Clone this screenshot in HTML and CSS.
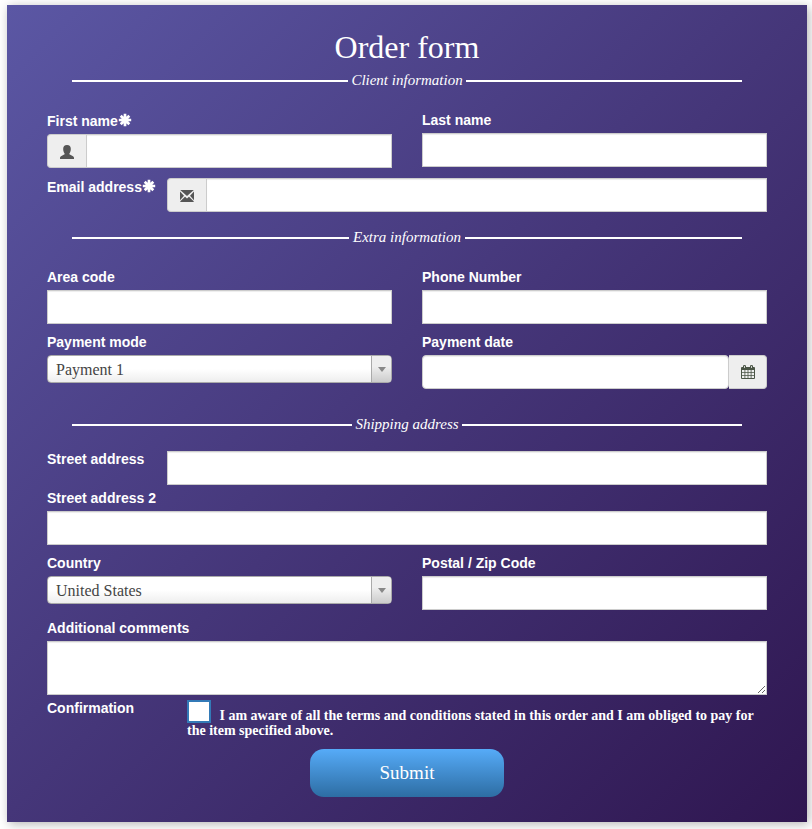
FILE: index.html
```html
<!DOCTYPE html>
<html lang="en">
<head>
<meta charset="utf-8">
<title>Order form</title>
<link rel="stylesheet" href="styles.css">
</head>
<body>
<svg class="defs" aria-hidden="true">
  <symbol id="asterisk" viewBox="0 0 14 14"><path d="M7 .8v12.400M.8 7h12.400M2.700 2.700l8.600 8.600M11.300 2.700l-8.600 8.600" stroke="currentColor" stroke-width="2.700"/></symbol>
  <symbol id="user" viewBox="0 0 14 14"><path fill="currentColor" d="M7 0C9.600 0 10.800 1.500 10.800 3.800C10.800 5.800 10.400 7.200 9.400 8.400V9.300L13 11.200C13.700 11.600 14 12 14 12.700V14H0V12.700C0 12 .3 11.600 1 11.200L4.600 9.300V8.400C3.600 7.200 3.200 5.800 3.200 3.800C3.200 1.500 4.400 0 7 0Z"/></symbol>
  <symbol id="mail" viewBox="0 0 14 12"><path fill="currentColor" d="M.2 0H13.800L7 6.100ZM0 1.400L4 5.700L0 10.200ZM14 1.400V10.200L10 5.700ZM5 6.700L7 8.500L9 6.700L13.700 11.200V12H.3V11.200Z"/></symbol>
  <symbol id="calendar" viewBox="0 0 14 14"><path fill="currentColor" fill-rule="evenodd" d="M1 2H2V1Q2 0 3.500 0T5 1V2H9V1Q9 0 10.500 0T12 1V2H13Q14 2 14 3V13Q14 14 13 14H1Q0 14 0 13V3Q0 2 1 2ZM1 5V7H3.500V5ZM4.300 5V7H6.600V5ZM7.400 5V7H9.700V5ZM10.500 5V7H13V5ZM1 7.800V10H3.500V7.800ZM4.300 7.800V10H6.600V7.800ZM7.400 7.800V10H9.700V7.800ZM10.500 7.800V10H13V7.800ZM1 10.800V13H3.500V10.800ZM4.300 10.800V13H6.600V10.800ZM7.400 10.800V13H9.700V10.800ZM10.500 10.800V13H13V10.800ZM3.100 1V3H3.900V1ZM10.100 1V3H10.900V1Z"/></symbol>
</svg>
<form class="order">
  <h1>Order form</h1>
  <div class="legend"><span>Client information</span></div>
  <div class="row names">
    <div class="field required"><label>First name<svg class="star"><use href="#asterisk"/></svg></label>
      <div class="group"><span class="addon"><svg class="icon"><use href="#user"/></svg></span><input type="text"></div></div>
    <div class="field"><label>Last name</label><input type="text"></div>
  </div>
  <div class="inline email"><label>Email address<svg class="star"><use href="#asterisk"/></svg></label>
    <div class="group"><span class="addon"><svg class="icon mail"><use href="#mail"/></svg></span><input type="text"></div></div>

  <div class="legend extra"><span>Extra information</span></div>
  <div class="row phone">
    <div class="field"><label>Area code</label><input type="text"></div>
    <div class="field"><label>Phone Number</label><input type="text"></div>
  </div>
  <div class="row">
    <div class="field"><label>Payment mode</label><div class="select"><span>Payment 1</span><b></b></div></div>
    <div class="field"><label>Payment date</label>
      <div class="group date"><input type="text"><span class="addon"><svg class="icon cal"><use href="#calendar"/></svg></span></div></div>
  </div>

  <div class="legend shipping"><span>Shipping address</span></div>
  <div class="inline street"><label>Street address</label><input type="text"></div>
  <div class="field street2"><label>Street address 2</label><input type="text"></div>
  <div class="row">
    <div class="field"><label>Country</label><div class="select"><span>United States</span><b></b></div></div>
    <div class="field"><label>Postal / Zip Code</label><input type="text"></div>
  </div>
  <div class="field comments"><label>Additional comments</label><textarea></textarea></div>
  <div class="confirm"><label>Confirmation</label>
    <p><span class="box"></span>I am aware of all the terms and conditions stated in this order and I am obliged to pay for the item specified above.</p></div>
  <button type="button">Submit</button>
</form>
</body>
</html>
```
FILE: styles.css
```css
* { box-sizing: border-box; }
body { margin: 0; padding: 5px 5px 7px 7px; background: #fff; overflow: hidden; font-family: "Liberation Serif", serif; color: #fff; }
.defs { display: none; }
.order { width: 800px; height: 817px; padding: 22px 40px 0; background: linear-gradient(135deg, #5b57a4 0%, #453679 50%, #2f1650 100%); box-shadow: 2px 2px 10px rgba(0, 0, 0, .3); display: flex; flex-direction: column; }
h1 { margin: 0; height: 40px; line-height: 40px; font-size: 32px; font-weight: 400; text-align: center; }
.legend { display: flex; align-items: center; gap: 3.5px; margin: 4px 25px 0; height: 18px; font-size: 15px; line-height: 18px; font-style: italic; }
.legend::before, .legend::after { content: ""; flex: 1; height: 2px; margin-top: 2px; background: #fff; }
.legend.extra { margin-top: 16px; gap: 4px; }
.legend.shipping { margin-top: 26px; }
.row { display: grid; grid-template-columns: 1fr 1fr; column-gap: 30px; margin-top: 8px; }
.names { margin-top: 21px; }
.phone { margin-top: 21px; }
label { display: block; height: 23px; font: bold 14px/20px "Liberation Sans", sans-serif; }
.required label { height: 24px; padding-top: 1px; }
.star { width: 14px; height: 14px; vertical-align: -1px; }
input, textarea { display: block; width: 100%; height: 34px; border: 1px solid #ccc; border-radius: 0; padding: 6px 12px; background: #fff; box-shadow: inset 0 1px 1px rgba(0, 0, 0, .075); outline: 0; }
.group { display: flex; height: 34px; }
.group input { flex: 1; min-width: 0; }
.addon { flex: none; width: 39px; display: flex; align-items: center; justify-content: center; background: #eee; border: 1px solid #ccc; border-right: 0; border-radius: 4px 0 0 4px; color: #555; }
.addon + input { width: auto; }
.icon { width: 14px; height: 14px; margin: 2px 1px 0 0; }
.icon.mail { height: 12px; margin: 2px 1px 0 0; }
.icon.cal { margin: 0; }
.date input { border-radius: 4px; }
.date .addon { border: 1px solid #ccc; border-left: 0; border-radius: 0 4px 4px 0; width: 38px; }
.date .cal { color: #4a5545; }
.inline { display: grid; grid-template-columns: 120px 1fr; }
.email { margin-top: 10px; height: 34px; }
.email label { margin-top: -1px; }
.select { display: flex; height: 28px; border: 1px solid #aaa; border-radius: 4px; overflow: hidden; background: linear-gradient(#fff 0%, #fff 50%, #eee 100%); color: #444; font-size: 16px; line-height: 28px; }
.select span { flex: 1; padding-left: 8px; }
.select b { width: 20px; border-left: 1px solid #aaa; background: linear-gradient(#eee 40%, #ccc); display: flex; align-items: center; justify-content: center; }
.select b::after { content: ""; border: 4px solid transparent; border-top: 5px solid #888; border-bottom: 0; }
.street { margin-top: 18px; height: 34px; }
.street label { margin-top: -2px; }
.street2 { margin-top: 3px; }
.comments { margin-top: 8px; }
textarea { height: 54px; resize: vertical; }
.confirm { display: grid; grid-template-columns: 140px 1fr; margin-top: 3px; height: 51px; }
.confirm p { margin: 2px 0 0; font-size: 14px; font-weight: 700; line-height: 15px; }
.box { display: inline-block; width: 24px; height: 23px; margin-right: 8.5px; vertical-align: -3px; background: #fff; border: 2px solid #337ab7; }
button { align-self: center; width: 194px; height: 48px; border: 0; border-radius: 14px; background: linear-gradient(#56abf8, #2d6da3); color: #fff; font: 19px "Liberation Serif", serif; }
```
